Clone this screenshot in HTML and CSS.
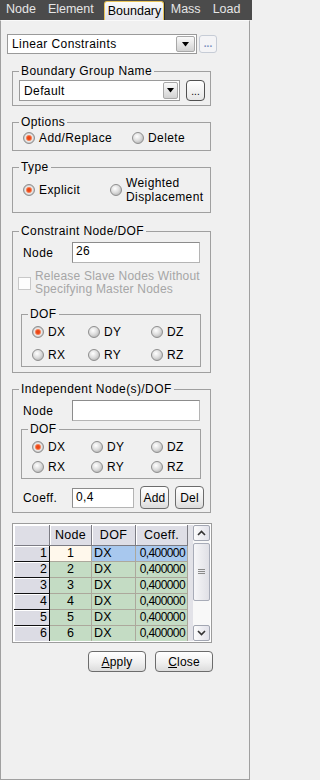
FILE: index.html
```html
<!DOCTYPE html>
<html>
<head>
<meta charset="utf-8">
<link rel="stylesheet" href="styles.css">
</head>
<body>
<div class="tabs">
  <span class="tab">Node</span>
  <span class="tab">Element</span>
  <span class="tab active">Boundary</span>
  <span class="tab mass">Mass</span>
  <span class="tab">Load</span>
</div>
<div class="panel">
  <div class="toprow">
    <div class="combo top"><span class="val">Linear Constraints</span><span class="ddbtn"><svg width="7" height="5" viewBox="0 0 7 5"><path d="M0 0H7L3.5 4.5Z" fill="#000"/></svg></span></div>
    <span class="dots disabled">...</span>
  </div>

  <fieldset class="grp g1">
    <legend>Boundary Group Name</legend>
    <div class="row">
      <div class="combo grpcombo"><span class="val">Default</span><span class="ddbtn small"><svg width="7" height="5" viewBox="0 0 7 5"><path d="M0 0H7L3.5 4.5Z" fill="#000"/></svg></span></div>
      <span class="dots">...</span>
    </div>
  </fieldset>

  <fieldset class="grp g2">
    <legend>Options</legend>
    <div class="row opts">
      <span class="radio on r-add"><i></i>Add/Replace</span>
      <span class="radio r-del"><i></i>Delete</span>
    </div>
  </fieldset>

  <fieldset class="grp g3">
    <legend>Type</legend>
    <div class="row types">
      <span class="radio on r-exp"><i></i>Explicit</span>
      <span class="radio r-wd"><i></i><span class="two">Weighted<br>Displacement</span></span>
    </div>
  </fieldset>

  <fieldset class="grp g4">
    <legend>Constraint Node/DOF</legend>
    <div class="row field">
      <span class="lbl">Node</span>
      <span class="input node">26</span>
    </div>
    <div class="row chk">
      <span class="cbox"></span>
      <span class="dis">Release Slave Nodes Without<br>Specifying Master Nodes</span>
    </div>
    <fieldset class="sub s1">
      <legend>DOF</legend>
      <div class="dofgrid a">
        <span class="radio on"><i></i>DX</span>
        <span class="radio"><i></i>DY</span>
        <span class="radio"><i></i>DZ</span>
        <span class="radio"><i></i>RX</span>
        <span class="radio"><i></i>RY</span>
        <span class="radio"><i></i>RZ</span>
      </div>
    </fieldset>
  </fieldset>

  <fieldset class="grp g5">
    <legend>Independent Node(s)/DOF</legend>
    <div class="row field">
      <span class="lbl">Node</span>
      <span class="input node"></span>
    </div>
    <fieldset class="sub s2">
      <legend>DOF</legend>
      <div class="dofgrid b">
        <span class="radio on"><i></i>DX</span>
        <span class="radio"><i></i>DY</span>
        <span class="radio"><i></i>DZ</span>
        <span class="radio"><i></i>RX</span>
        <span class="radio"><i></i>RY</span>
        <span class="radio"><i></i>RZ</span>
      </div>
    </fieldset>
    <div class="row coeff">
      <span class="lbl">Coeff.</span>
      <span class="input cf">0,4</span>
      <span class="btn add">Add</span>
      <span class="btn del">Del</span>
    </div>
  </fieldset>

  <div class="grid">
    <div class="tblwrap">
      <table>
        <colgroup><col class="c0"><col class="c1"><col class="c2"><col class="c3"></colgroup>
        <tr class="hd"><th></th><th>Node</th><th>DOF</th><th>Coeff.</th></tr>
        <tr><th class="rh">1</th><td class="n cur">1</td><td class="d sel">DX</td><td class="c sel">0,400000</td></tr>
        <tr><th class="rh">2</th><td class="n">2</td><td class="d">DX</td><td class="c">0,400000</td></tr>
        <tr><th class="rh">3</th><td class="n">3</td><td class="d">DX</td><td class="c">0,400000</td></tr>
        <tr><th class="rh">4</th><td class="n">4</td><td class="d">DX</td><td class="c">0,400000</td></tr>
        <tr><th class="rh">5</th><td class="n">5</td><td class="d">DX</td><td class="c">0,400000</td></tr>
        <tr><th class="rh">6</th><td class="n">6</td><td class="d">DX</td><td class="c">0,400000</td></tr>
      </table>
    </div>
    <div class="gridgap"></div>
    <div class="sb">
      <span class="sbb"><svg width="9" height="6" viewBox="0 0 9 6"><path d="M1 5L4.5 1.5L8 5" fill="none" stroke="#333" stroke-width="1.6"/></svg></span>
      <span class="thumb"><svg width="7" height="6" viewBox="0 0 7 6"><path d="M0 0.5H7M0 2.5H7M0 4.5H7" stroke="#8a8a8a" stroke-width="1"/></svg></span>
      <span class="track"></span>
      <span class="sbb"><svg width="9" height="6" viewBox="0 0 9 6"><path d="M1 1L4.5 4.5L8 1" fill="none" stroke="#333" stroke-width="1.6"/></svg></span>
    </div>
  </div>

  <div class="actions">
    <span class="btn big"><u>A</u>pply</span>
    <span class="btn big"><u>C</u>lose</span>
  </div>
</div>
</body>
</html>
```

FILE: styles.css
```css
* { box-sizing: border-box; }
html, body { margin: 0; padding: 0; }
body {
  width: 252px;
  height: 780px;
  background: #f0f0f0;
  font-family: "Liberation Sans", Arial, sans-serif;
  font-size: 12px;
  letter-spacing: 0.4px;
  color: #000;
  overflow: hidden;
}

/* tabs */
.tabs {
  height: 20px;
  background: #4b4b4b;
  display: flex;
  align-items: flex-end;
  color: #e6e6e6;
  font-size: 12.5px;
  letter-spacing: 0;
}
.tab { padding: 0 6px; height: 20px; line-height: 19px; }
.tab.active {
  margin-left: 4px;
  width: 60px;
  height: 19px;
  line-height: 18px;
  padding: 0 3px;
  color: #000;
  background: linear-gradient(#fbfbfb, #e2e2e8);
  border: 1px solid #e8c45a;
  border-bottom: none;
  border-radius: 3px 3px 0 0;
  box-shadow: 1px 0 0 #2a2a2a;
}
.tab.mass { padding-left: 7px; }

/* panel */
.panel {
  width: 250px;
  height: 760px;
  border: 1px solid #a0a0a0;
  border-top-color: #fafafa;
  display: flex;
  flex-direction: column;
  align-items: flex-start;
}

.toprow {
  margin: 13px 0 0 6px;
  display: flex;
  align-items: center;
  gap: 2px;
}

.combo {
  height: 20px;
  border: 1px solid #9a9a9a;
  background: #fff;
  display: flex;
  align-items: center;
}
.combo.top { width: 190px; }
.combo.grpcombo { width: 161px; height: 21px; }
.combo .val { flex: 1; padding-left: 4px; line-height: 16px; }
.ddbtn {
  width: 19px;
  height: 16px;
  margin-right: 1px;
  border: 1px solid #a8a8a8;
  border-radius: 2px;
  background: linear-gradient(#fafafa, #d2d2d2);
  display: flex;
  align-items: center;
  justify-content: center;
}
.ddbtn.small { width: 15px; height: 17px; }

.dots {
  display: flex;
  align-items: flex-end;
  justify-content: center;
  border-radius: 3px;
  font-weight: bold;
  letter-spacing: 0;
}
.dots.disabled {
  width: 18px;
  height: 18px;
  border: 1px solid #c6ccd6;
  background: #f4f4f6;
  color: #7a90c0;
  font-size: 10px;
  line-height: 12px;
  padding-bottom: 2px;
}
.g1 .dots {
  width: 19px;
  height: 21px;
  margin-left: 6px;
  border: 1px solid #505050;
  border-radius: 4px;
  background: linear-gradient(#ffffff, #e6e6e6);
  color: #000;
  font-size: 10px;
  font-weight: normal;
  padding-bottom: 3px;
}

/* group boxes */
fieldset {
  margin: 0;
  min-width: 0;
  border: 1px solid #a0a0a0;
}
legend {
  padding: 0 2px;
  line-height: 14px;
  height: 14px;
}
.grp {
  margin-left: 11px;
  width: 199px;
  padding: 0 4px 0 6px;
}
.row { display: flex; align-items: center; }

.g1 { margin-top: 10px; padding-top: 2px; padding-bottom: 4px; }
.g2 { margin-top: 9px; padding-top: 1px; padding-bottom: 4px; }
.g3 { margin-top: 9px; padding-top: 2px; padding-bottom: 8px; }
.g4 { margin-top: 11px; padding-top: 4px; padding-bottom: 5px; }
.g5 { margin-top: 9px; padding-top: 4px; padding-bottom: 3px; }

.opts { height: 16px; }
.types { height: 28px; }

/* radios */
.radio { display: inline-flex; align-items: center; height: 16px; white-space: nowrap; }
.radio i {
  flex: none;
  width: 12px;
  height: 12px;
  border-radius: 50%;
  border: 1px solid #8e8e8e;
  background: radial-gradient(circle at 40% 35%, #ffffff 0, #dedede 45%, #a4a4a4 100%);
  margin-right: 4px;
}
.radio.on i {
  background: radial-gradient(circle at 50% 50%, #e8400e 0, #ee5020 1.8px, #f59a78 2.8px, #ececec 3.6px, #cfcfcf 4.6px, #a8a8a8 6px);
}
.r-add { margin-left: 4px; width: 109px; }
.r-exp { margin-left: 4px; width: 87px; }
.r-wd { height: 28px; }
.two { line-height: 14px; }

.field { height: 21px; }
.lbl { margin-left: 4px; width: 49px; }
.input {
  height: 21px;
  border: 1px solid #8c8c8c;
  border-right-color: #b4b4b4;
  border-bottom-color: #b4b4b4;
  background: #fff;
  padding: 1px 3px;
  line-height: 14px;
}
.input.node { width: 128px; }
.input.cf { width: 62px; height: 20px; }

.chk { margin-top: 7px; height: 26px; }
.cbox {
  width: 13px;
  height: 13px;
  margin-left: -1px;
  border: 1px solid #c8c8c8;
  background: #fdfdfd;
  flex: none;
}
.dis {
  margin-left: 4px;
  color: #a6a6a6;
  line-height: 13px;
  letter-spacing: 0.2px;
}

.sub {
  margin-left: 2px;
  width: 180px;
  padding: 3px 2px 3px 6px;
}
.s1 { margin-top: 11px; }
.s2 { margin-top: 1px; }
.dofgrid {
  display: grid;
  margin-left: 4px;
}
.dofgrid.a { grid-template-columns: 56px 63px auto; row-gap: 7px; }
.dofgrid.b { grid-template-columns: 59px 60px auto; row-gap: 4px; }

.coeff { margin-top: 7px; height: 23px; }
.btn {
  display: flex;
  align-items: center;
  justify-content: center;
  border: 1px solid #6c6c6c;
  border-radius: 4px;
  background: linear-gradient(#ffffff, #f0f0f0 55%, #dcdcdc);
  letter-spacing: 0.2px;
}
.btn.add { width: 29px; height: 23px; margin-left: 6px; }
.btn.del { width: 29px; height: 23px; margin-left: 6px; }

/* grid */
.grid {
  margin: 10px 0 0 11px;
  width: 200px;
  height: 120px;
  border: 1px solid #9c9c9c;
  padding: 1px;
  background: #fff;
  display: flex;
  letter-spacing: 0;
}
.tblwrap { width: 174px; height: 116px; overflow: hidden; }
table {
  border-collapse: separate;
  border-spacing: 0;
  table-layout: fixed;
  width: 174px;
  font-size: 12px;
}
col.c0 { width: 36px; }
col.c1 { width: 42px; }
col.c2 { width: 44px; }
col.c3 { width: 52px; }
th, td { padding: 0; font-weight: normal; white-space: nowrap; overflow: hidden; }
tr.hd th {
  height: 21px;
  background: #dedee6;
  border-right: 1px solid #7c7c84;
  border-bottom: 1px solid #7c7c84;
  box-shadow: inset 1px 1px 0 #ffffff;
  text-align: center;
  font-size: 12.5px;
  letter-spacing: 0.3px;
}
td, th.rh { height: 16px; line-height: 15px; font-size: 12.5px; }
th.rh {
  background: #dcdce4;
  border-right: 1px solid #111;
  border-bottom: 1px solid #111;
  box-shadow: inset 1px 1px 0 #ffffff;
  text-align: right;
  padding-right: 2px;
}
td {
  background: #c4dcc4;
  border-right: 1px solid #aca89c;
  border-bottom: 1px solid #aca89c;
}
td.n { text-align: center; }
td.d { text-align: left; padding-left: 2px; letter-spacing: 0.3px; }
td.c { text-align: right; padding-right: 2px; font-size: 12px; letter-spacing: -0.6px; }
td.cur { background: #fff8ec; }
td.sel { background: #a8c8ee; }

.gridgap { width: 5px; background: #e2e2e8; }
.sb {
  width: 17px;
  display: flex;
  flex-direction: column;
  background: #f8f8f8;
}
.sbb {
  height: 16px;
  flex: none;
  border: 1px solid #a2a6b2;
  border-radius: 2px;
  background: linear-gradient(90deg, #fcfcfc, #e2e2ea);
  display: flex;
  align-items: center;
  justify-content: center;
}
.thumb {
  margin-top: 2px;
  height: 58px;
  flex: none;
  border: 1px solid #a8acb8;
  border-radius: 2px;
  background: linear-gradient(90deg, #f6f6f8, #e0e0e6);
  display: flex;
  align-items: center;
  justify-content: center;
}
.track { flex: 1; }

.actions {
  margin: 8px 0 0 87px;
  display: flex;
  gap: 9px;
}
.btn.big { width: 58px; height: 21px; }
.btn u { text-decoration: underline; }
```
